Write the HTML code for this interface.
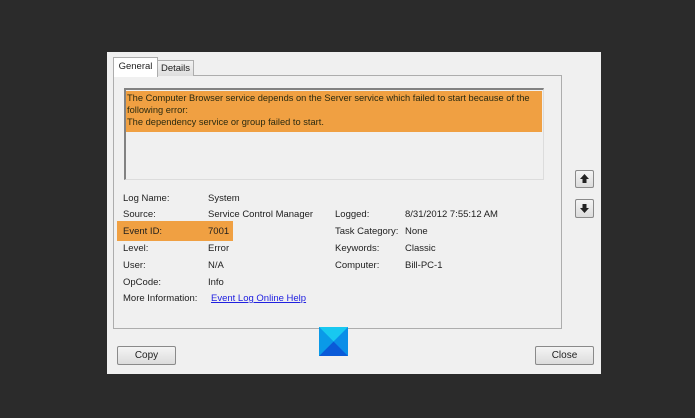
<!DOCTYPE html><html><head><style>
body{margin:0;width:695px;height:418px;background:#2b2b2b;position:relative;overflow:hidden;font-family:"Liberation Sans",sans-serif;font-size:9.5px;color:#1e1e1e}
.a{position:absolute}
.dlg{left:107px;top:52px;width:494px;height:322px;background:#f0f0f0}
.btn{position:absolute;border:1px solid #8a8a8a;border-radius:2px;background:linear-gradient(#f4f4f4,#dcdcdc);text-align:center;font-size:10px;line-height:18px}
.t{position:absolute;white-space:nowrap}
</style></head><body>
<div class="a dlg"></div>
<div class="a" style="left:113px;top:75px;width:447px;height:252px;border:1px solid #adadad;background:#f0f0f0"></div>
<div class="a" style="left:157px;top:60px;width:35px;height:15px;border:1px solid #adadad;border-bottom:none;background:linear-gradient(#f2f2f2,#dedede);font-size:9.5px;text-align:center;line-height:15px">Details</div>
<div class="a" style="left:113px;top:57px;width:43px;height:19px;border:1px solid #adadad;border-bottom:none;background:#fff;font-size:9.5px;text-align:center;line-height:17px">General</div>
<div class="a" style="left:124px;top:88px;width:417px;height:89px;border:1px solid #dcdcdc;border-top:2px solid #828282;border-left:2px solid #828282;background:#f0f0f0"></div>
<div class="a" style="left:126px;top:91px;width:416px;height:41px;background:#f0a042"></div>
<div class="t" style="left:127px;top:92px;line-height:12px;font-size:9.3px;color:#2a2a10">The Computer Browser service depends on the Server service which failed to start because of the<br>following error:<br>The dependency service or group failed to start.</div>
<div class="a" style="left:117px;top:221px;width:116px;height:20px;background:#f0a042"></div>
<div class="t" style="left:123px;top:193px">Log Name:</div><div class="t" style="left:208px;top:193px">System</div>
<div class="t" style="left:123px;top:209px">Source:</div><div class="t" style="left:208px;top:209px">Service Control Manager</div>
<div class="t" style="left:123px;top:226px">Event ID:</div><div class="t" style="left:208px;top:226px">7001</div>
<div class="t" style="left:123px;top:243px">Level:</div><div class="t" style="left:208px;top:243px">Error</div>
<div class="t" style="left:123px;top:260px">User:</div><div class="t" style="left:208px;top:260px">N/A</div>
<div class="t" style="left:123px;top:277px">OpCode:</div><div class="t" style="left:208px;top:277px">Info</div>
<div class="t" style="left:123px;top:293px">More Information:</div><div class="t" style="left:211px;top:293px;color:#2020e0;text-decoration:underline">Event Log Online Help</div>
<div class="t" style="left:335px;top:209px">Logged:</div><div class="t" style="left:405px;top:209px">8/31/2012 7:55:12 AM</div>
<div class="t" style="left:335px;top:226px">Task Category:</div><div class="t" style="left:405px;top:226px">None</div>
<div class="t" style="left:335px;top:243px">Keywords:</div><div class="t" style="left:405px;top:243px">Classic</div>
<div class="t" style="left:335px;top:260px">Computer:</div><div class="t" style="left:405px;top:260px">Bill-PC-1</div>
<div class="btn" style="left:575px;top:170px;width:17px;height:16px"><svg width="17" height="16"><path d="M8.5 3 L13 8 H10.5 V12 H6.5 V8 H4 Z" fill="#222"/></svg></div>
<div class="btn" style="left:575px;top:199px;width:17px;height:17px"><svg width="17" height="17"><path d="M8.5 13 L13 8 H10.5 V4 H6.5 V8 H4 Z" fill="#222"/></svg></div>
<div class="btn" style="left:117px;top:346px;width:57px;height:17px">Copy</div>
<div class="btn" style="left:535px;top:346px;width:57px;height:17px">Close</div>
<svg class="a" style="left:319px;top:327px" width="29" height="29"><rect width="29" height="29" fill="#0a8ee8"/><path d="M0 0 L14.5 14.5 L29 0Z" fill="#18c8f0"/><path d="M0 29 L14.5 14.5 L29 29Z" fill="#0a5ad8"/><path d="M0 0 L14.5 14.5 L0 29Z" fill="#0a9ae8"/></svg>
</body></html>
